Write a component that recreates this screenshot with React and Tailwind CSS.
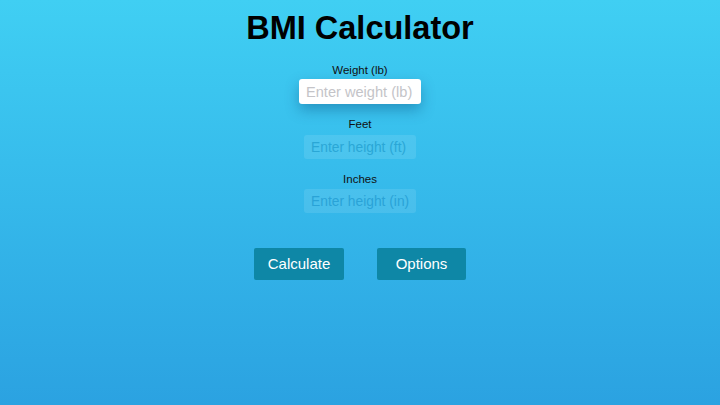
export default function App() {
  return (
    <main
      className="min-h-[405px] w-full flex flex-col items-center bg-gradient-to-b from-[#40cff3] to-[#2ba2e1] text-[#111]"
      style={{ fontFamily: '"Liberation Sans", Arial, sans-serif' }}
    >
      <h1 className="mt-[9px] text-[32.5px] leading-[38px] font-bold text-black">
        BMI Calculator
      </h1>

      {/* Weight (focused) */}
      <label className="mt-[15px] text-[11.5px] leading-[16px]">Weight (lb)</label>
      <input
        className="mt-px h-[25px] w-[122px] rounded-[3px] bg-white px-[7px] text-[14.6px] shadow-[0_6px_14px_rgba(0,60,110,0.35)] outline-none placeholder:text-[#c4c4c8]"
        placeholder="Enter weight (lb)"
      />

      {/* Feet */}
      <label className="mt-[12px] text-[11.5px] leading-[16px]">Feet</label>
      <input
        className="mt-[3px] h-[24px] w-[112px] rounded-[3px] bg-white/10 px-[7px] text-[13.8px] outline-none placeholder:text-[#2aa7d6]"
        placeholder="Enter height (ft)"
      />

      {/* Inches */}
      <label className="mt-[12px] text-[11.5px] leading-[16px]">Inches</label>
      <input
        className="mt-[2px] h-[24px] w-[112px] rounded-[3px] bg-white/10 px-[7px] text-[13.8px] outline-none placeholder:text-[#2aa3d7]"
        placeholder="Enter height (in)"
      />

      <div className="mt-[35px] flex gap-[33px]">
        <button className="h-[32px] w-[90px] rounded-[2px] bg-[#0e87a6] text-[15px] text-white">
          Calculate
        </button>
        <button className="h-[32px] w-[89px] rounded-[2px] bg-[#0e87a6] text-[15px] text-white">
          Options
        </button>
      </div>
    </main>
  );
}
